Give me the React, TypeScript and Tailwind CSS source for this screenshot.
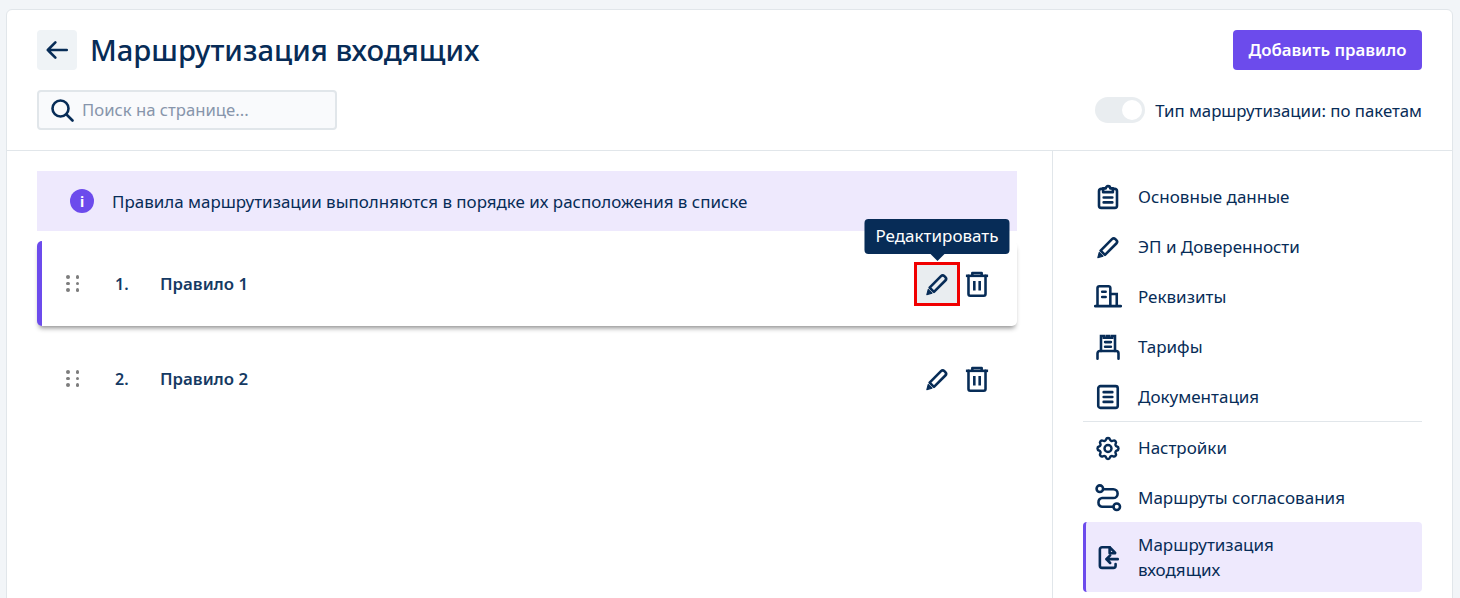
import type { ReactNode } from 'react';
import { TbSettings } from 'react-icons/tb';

const navy = '#072c57';

function Icon({ children, className = 'w-7 h-7', sw = 2.2 }: { children: ReactNode; className?: string; sw?: number }) {
  return (
    <svg viewBox="0 0 24 24" fill="none" stroke={navy} strokeWidth={sw} strokeLinecap="round" strokeLinejoin="round" className={className}>
      {children}
    </svg>
  );
}

const PenIcon = () => (
  <Icon className="w-[26px] h-[26px]" sw={2.4}>
    <path d="M5.200 15.300 15.700 4.800a2.200 2.200 0 0 1 3.100 0l.900.900a2.200 2.200 0 0 1 0 3.100L9.200 19.300z" />
    <path d="M2.600 21.800l1.300-4.800 3.500 3.500z" fill={navy} strokeWidth="1" />
  </Icon>
);

const TrashIcon = () => (
  <Icon>
    <path d="M2.500 5h19" strokeLinecap="butt" />
    <path d="M8 4.500V2.500h8v2" strokeLinecap="butt" />
    <path d="M4.700 5v15.500a1.500 1.500 0 0 0 1.500 1.500h11.600a1.500 1.500 0 0 0 1.500-1.500V5" />
    <path d="M9.700 9.500v8M14.300 9.500v8" strokeLinecap="butt" />
  </Icon>
);

const navItems: { label: string; icon: ReactNode }[] = [
  {
    label: 'Основные данные',
    icon: (
      <Icon className="w-[26px] h-[26px]" sw={2.400}>
        <path d="M7.500 4.500H5.700a2 2 0 0 0-2 2V20a2 2 0 0 0 2 2h12.600a2 2 0 0 0 2-2V6.500a2 2 0 0 0-2-2h-1.800" />
        <path d="M7.500 7.500v-3.500h2.500a2 2 0 0 1 4 0h2.500v3.500z" />
        <path d="M8 12.500h8M8 17h8" />
      </Icon>
    ),
  },
  { label: 'ЭП и Доверенности', icon: <PenIcon /> },
  {
    label: 'Реквизиты',
    icon: (
      <Icon>
        <path d="M1 19.800h22" />
        <path d="M3 19.500V4.300a1.500 1.500 0 0 1 1.500-1.500h8a1.500 1.500 0 0 1 1.500 1.500V19.500" />
        <path d="M14 9.500h5.500V19.500" strokeLinejoin="miter" />
        <path d="M7 7.500h3M7 12h3" />
      </Icon>
    ),
  },
  {
    label: 'Тарифы',
    icon: (
      <Icon>
        <path d="M6 15.500V2.500h2.500v1.500h2.500V2.500h2v1.500h2.500V2.500H18v13" strokeLinejoin="miter" />
        <path d="M3 22v-4.500a2 2 0 0 1 2-2h14a2 2 0 0 1 2 2V22" />
        <path d="M9.500 7.800h5M9.500 11.800h5" />
      </Icon>
    ),
  },
  {
    label: 'Документация',
    icon: (
      <Icon className="w-[26px] h-[26px]" sw={2.400}>
        <rect x="3" y="2" width="18" height="20" rx="2" />
        <path d="M8 7.500h8M8 12h8M8 16.500h8" />
      </Icon>
    ),
  },
];

const navItemsBottom: { label: string; icon: ReactNode }[] = [
  { label: 'Настройки', icon: <TbSettings size={31} color={navy} strokeWidth={2.1} /> },
  {
    label: 'Маршруты согласования',
    icon: (
      <Icon>
        <circle cx="5" cy="4" r="2.800" />
        <circle cx="19.500" cy="19.500" r="2.800" />
        <path d="M8 4.500h8.500a3.700 3.700 0 0 1 0 7.500H7a3.800 3.800 0 0 0 0 7.500h9.500" />
      </Icon>
    ),
  },
];

function NavRow({ icon, label }: { icon: ReactNode; label: string }) {
  return (
    <div className="flex items-center h-[50px] pl-[11px]">
      <div className="w-[28px] flex justify-center shrink-0">{icon}</div>
      <span className="ml-[16px] text-[17px] text-[#072c57]">{label}</span>
    </div>
  );
}

function RuleRow({ index, name, active }: { index: number; name: string; active?: boolean }) {
  return (
    <div
      className={
        'relative flex items-center h-[85px] rounded-[5px] pr-[26px] ' +
        (active ? 'border-l-[5px] border-[#6c4bec] pl-[24px] shadow-[0_4px_5px_-2px_rgba(0,0,0,0.45)] bg-white' : 'pl-[29px]')
      }
    >
      <div className="grid grid-cols-2 gap-x-[6px] gap-y-[3px] w-[13px]">
        {Array.from({ length: 6 }).map((_, i) => (
          <span key={i} className="w-[3.5px] h-[3.5px] rounded-full bg-[#7d7d7d]" />
        ))}
      </div>
      <span className="ml-[36px] w-[45px] pt-[1px] text-[16px] font-semibold text-[#153a63]">{index}.</span>
      <span className="pt-[1px] text-[16.8px] font-semibold text-[#153a63]">{name}</span>
      <div className="ml-auto flex items-center gap-[3px]">
        <div
          className={
            'relative w-[46px] h-[44px] flex items-center justify-center ' +
            (active ? 'border-[3px] border-[#f00000] bg-[#e9edf0]' : '')
          }
        >
          <PenIcon />
          {active && (
            <div className="absolute left-1/2 -translate-x-1/2 bottom-[49px] h-[35px] px-[11px] flex items-center rounded-[4px] bg-[#072c57] text-white text-[17px] whitespace-nowrap">
              Редактировать
              <span className="absolute left-1/2 -translate-x-1/2 -bottom-[7px] w-0 h-0 border-x-[8px] border-x-transparent border-t-[8px] border-t-[#072c57]" />
            </div>
          )}
        </div>
        <TrashIcon />
      </div>
    </div>
  );
}

export default function App() {
  return (
    <div className="h-[598px] overflow-hidden bg-[#f2f5f8] pt-[9px] pl-[6px] pr-[7px] font-['Noto_Sans',sans-serif]">
      <div className="h-[640px] bg-white border border-[#e1e6ea] rounded-[6px]">
        {/* Header */}
        <div className="h-[141px] border-b border-[#e1e6ea] px-[30px] pt-[20px]">
          <div className="flex items-center justify-between">
            <div className="flex items-center">
              <div className="w-10 h-10 rounded-[4px] bg-[#eff3f6] flex items-center justify-center">
                <Icon className="w-[26px] h-[26px]" sw={2.400}>
                  <path d="M21 12H3.500M10.500 5l-7 7 7 7" />
                </Icon>
              </div>
              <h1 className="ml-[13px] pt-[2px] text-[29.2px] font-medium leading-none text-[#072c57]">Маршрутизация входящих</h1>
            </div>
            <button className="h-10 w-[189px] rounded-[4px] bg-[#6c4bec] text-white text-[16.8px] font-semibold">
              Добавить правило
            </button>
          </div>
          <div className="mt-5 flex items-center justify-between">
            <div className="w-[300px] h-10 rounded-[4px] border-2 border-[#e1e6ea] bg-[#f9fafc] flex items-center pl-[11px]">
              <svg viewBox="0 0 24 24" fill="none" stroke={navy} strokeWidth="2.600" strokeLinecap="round" className="w-6 h-6">
                <circle cx="10.500" cy="10.500" r="8" />
                <path d="M16.500 16.500l6 6" />
              </svg>
              <span className="ml-[8px] text-[16.7px] text-[#8795ab]">Поиск на странице...</span>
            </div>
            <div className="flex items-center">
              <div className="relative w-[50px] h-[26px] rounded-full bg-[#e9edf0]">
                <span className="absolute right-[3px] top-[3px] w-5 h-5 rounded-full bg-white" />
              </div>
              <span className="ml-[10px] pt-[1px] text-[16.8px] text-[#072c57]">Тип маршрутизации: по пакетам</span>
            </div>
          </div>
        </div>

        <div className="flex">
          {/* Rules */}
          <div className="w-[1046px] border-r border-[#e1e6ea] h-[500px] pl-[30px] pr-[35px] pt-[20px]">
            <div className="h-[60px] bg-[#eee9fd] flex items-center pl-[33px]">
              <span className="w-[24px] h-[24px] rounded-full bg-[#6c4bec] text-white text-[14px] font-bold flex items-center justify-center">
                i
              </span>
              <span className="ml-[18px] pt-[1px] text-[16.95px] text-[#072c57]">
                Правила маршрутизации выполняются в порядке их расположения в списке
              </span>
            </div>
            <div className="mt-[10px] flex flex-col gap-[10px]">
              <RuleRow index={1} name="Правило 1" active />
              <RuleRow index={2} name="Правило 2" />
            </div>
          </div>

          {/* Side menu */}
          <div className="flex-1 pl-[30px] pr-[30px] pt-[21px]">
            {navItems.map((item, i) => (
              <NavRow key={i} icon={item.icon} label={item.label} />
            ))}
            <div className="border-t border-[#e1e6ea] mt-[-1px]" />
            <div className="pt-[1px]">
              {navItemsBottom.map((item, i) => (
                <NavRow key={i} icon={item.icon} label={item.label} />
              ))}
            </div>
            <div className="flex items-center h-[70px] pl-[8px] border-l-[3px] border-[#6c4bec] bg-[#eee9fd] rounded-[4px] mt-[-1px]">
              <div className="w-[28px] flex justify-center shrink-0">
                <Icon className="w-[26px] h-[26px]" sw={2.400}>
                  <path d="M18.500 8 13.500 3H6.500a2 2 0 0 0-2 2v15a2 2 0 0 0 2 2h10.500a2 2 0 0 0 2-2v-1.500" />
                  <path d="M13.500 3v5.500h5" />
                  <path d="M21 14H10.500M14 10.500 10.500 14l3.500 3.500" />
                </Icon>
              </div>
              <span className="ml-[16px] text-[17px] leading-[25px] text-[#072c57]">
                Маршрутизация
                <br />
                входящих
              </span>
            </div>
          </div>
        </div>
      </div>
    </div>
  );
}
